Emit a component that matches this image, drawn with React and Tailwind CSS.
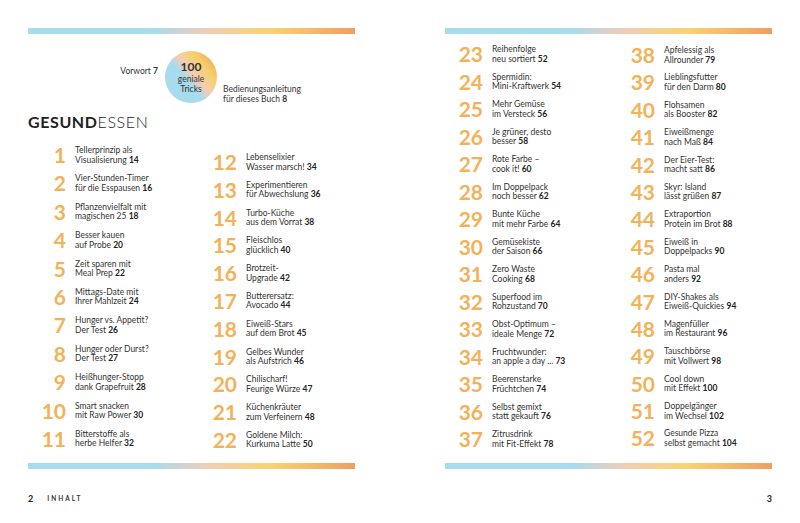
import React from "react";

const leftA = [
  [1, "Tellerprinzip als", "Visualisierung", 14],
  [2, "Vier-Stunden-Timer", "für die Esspausen", 16],
  [3, "Pflanzenvielfalt mit", "magischen 25", 18],
  [4, "Besser kauen", "auf Probe", 20],
  [5, "Zeit sparen mit", "Meal Prep", 22],
  [6, "Mittags-Date mit", "Ihrer Mahlzeit", 24],
  [7, "Hunger vs. Appetit?", "Der Test", 26],
  [8, "Hunger oder Durst?", "Der Test", 27],
  [9, "Heißhunger-Stopp", "dank Grapefruit", 28],
  [10, "Smart snacken", "mit Raw Power", 30],
  [11, "Bitterstoffe als", "herbe Helfer", 32],
];

const leftB = [
  [12, "Lebenselixier", "Wasser marsch!", 34],
  [13, "Experimentieren", "für Abwechslung", 36],
  [14, "Turbo-Küche", "aus dem Vorrat", 38],
  [15, "Fleischlos", "glücklich", 40],
  [16, "Brotzeit-", "Upgrade", 42],
  [17, "Butterersatz:", "Avocado", 44],
  [18, "Eiweiß-Stars", "auf dem Brot", 45],
  [19, "Gelbes Wunder", "als Aufstrich", 46],
  [20, "Chilischarf!", "Feurige Würze", 47],
  [21, "Küchenkräuter", "zum Verfeinern", 48],
  [22, "Goldene Milch:", "Kurkuma Latte", 50],
];

const rightA = [
  [23, "Reihenfolge", "neu sortiert", 52],
  [24, "Spermidin:", "Mini-Kraftwerk", 54],
  [25, "Mehr Gemüse", "im Versteck", 56],
  [26, "Je grüner, desto", "besser", 58],
  [27, "Rote Farbe –", "cook it!", 60],
  [28, "Im Doppelpack", "noch besser", 62],
  [29, "Bunte Küche", "mit mehr Farbe", 64],
  [30, "Gemüsekiste", "der Saison", 66],
  [31, "Zero Waste", "Cooking", 68],
  [32, "Superfood im", "Rohzustand", 70],
  [33, "Obst-Optimum –", "ideale Menge", 72],
  [34, "Fruchtwunder:", "an apple a day ...", 73],
  [35, "Beerenstarke", "Früchtchen", 74],
  [36, "Selbst gemixt", "statt gekauft", 76],
  [37, "Zitrusdrink", "mit Fit-Effekt", 78],
];

const rightB = [
  [38, "Apfelessig als", "Allrounder", 79],
  [39, "Lieblingsfutter", "für den Darm", 80],
  [40, "Flohsamen", "als Booster", 82],
  [41, "Eiweißmenge", "nach Maß", 84],
  [42, "Der Eier-Test:", "macht satt", 86],
  [43, "Skyr: Island", "lässt grüßen", 87],
  [44, "Extraportion", "Protein im Brot", 88],
  [45, "Eiweiß in", "Doppelpacks", 90],
  [46, "Pasta mal", "anders", 92],
  [47, "DIY-Shakes als", "Eiweiß-Quickies", 94],
  [48, "Magenfüller", "im Restaurant", 96],
  [49, "Tauschbörse", "mit Vollwert", 98],
  [50, "Cool down", "mit Effekt", 100],
  [51, "Doppelgänger", "im Wechsel", 102],
  [52, "Gesunde Pizza", "selbst gemacht", 104],
];

const Bar = () => (
  <div className="h-[6px] w-full bg-[linear-gradient(90deg,#a7dbee_0%,#a7dbee_38%,#f1cdb6_55%,#f8d372_74%,#ee9f62_100%)]" />
);

const Row = ({ item, h }) => (
  <div className={`flex items-start gap-[9px] ${h}`}>
    <div className="w-[38px] shrink-0 text-right text-[21px] font-bold leading-[21px] -mt-[2px] text-[#f2b25a]">
      {item[0]}
    </div>
    <div className="text-[8.5px] leading-[9.5px] text-[#333]">
      <div>{item[1]}</div>
      <div>
        {item[2]} <span className="font-bold text-[#222]">{item[3]}</span>
      </div>
    </div>
  </div>
);

const Column = ({ items, h, className }) => (
  <div className={`flex flex-col ${className}`}>
    {items.map((it) => (
      <Row key={it[0]} item={it} h={h} />
    ))}
  </div>
);

const App = () => {
  return (
    <div className="w-[800px] h-[523px] bg-white flex font-['Lato',sans-serif] text-[#333] overflow-hidden">
      {/* linke Seite */}
      <div className="w-[400px] h-full flex flex-col pt-[28px] pl-[28px] pr-[45px] pb-[19px]">
        <Bar />
        <div className="flex items-start mt-[17px]">
          <div className="w-[130px] text-right text-[8.5px] mt-[14px]">
            Vorwort <span className="font-bold">7</span>
          </div>
          <div className="ml-[7px] w-[52px] h-[52px] rounded-full bg-[linear-gradient(50deg,#a7dbee_0%,#a7dbee_42%,#f3cdb2_55%,#f7d06c_72%,#ec9b5a_100%)] flex flex-col items-center justify-center text-[#333]">
            <div className="text-[12px] font-bold leading-[14px]">100</div>
            <div className="text-[8.5px] leading-[10px]">geniale</div>
            <div className="text-[8.5px] leading-[10px]">Tricks</div>
          </div>
          <div className="ml-[6px] mt-[34px] text-[8.5px] leading-[9.5px]">
            <div>Bedienungsanleitung</div>
            <div>
              für dieses Buch <span className="font-bold">8</span>
            </div>
          </div>
        </div>
        <div className="mt-[9px] text-[16px] leading-[17px] tracking-[0.6px] text-[#222]">
          <span className="font-bold">GESUND</span>
          <span className="font-light">ESSEN</span>
        </div>
        <div className="grid grid-cols-[171px_1fr] mt-[16px]">
          <Column items={leftA} h="h-[28.4px]" />
          <Column items={leftB} h="h-[27.8px]" className="pt-[7px]" />
        </div>
        <div className="mt-auto">
          <Bar />
          <div className="mt-[25px] flex items-center h-[10px]">
            <span className="text-[9px] font-bold text-[#222]">2</span>
            <span className="ml-[14px] text-[6.5px] font-bold tracking-[2px] text-[#333]">
              INHALT
            </span>
          </div>
        </div>
      </div>

      {/* rechte Seite */}
      <div className="w-[400px] h-full flex flex-col pt-[28px] pl-[45px] pr-[28px] pb-[19px]">
        <Bar />
        <div className="grid grid-cols-[172px_1fr] mt-[11px]">
          <Column items={rightA} h="h-[27.5px]" />
          <Column items={rightB} h="h-[27.4px]" className="pt-[1px]" />
        </div>
        <div className="mt-auto">
          <Bar />
          <div className="mt-[25px] flex items-center justify-end h-[10px]">
            <span className="text-[9px] font-bold text-[#222]">3</span>
          </div>
        </div>
      </div>
    </div>
  );
};

export default App;
